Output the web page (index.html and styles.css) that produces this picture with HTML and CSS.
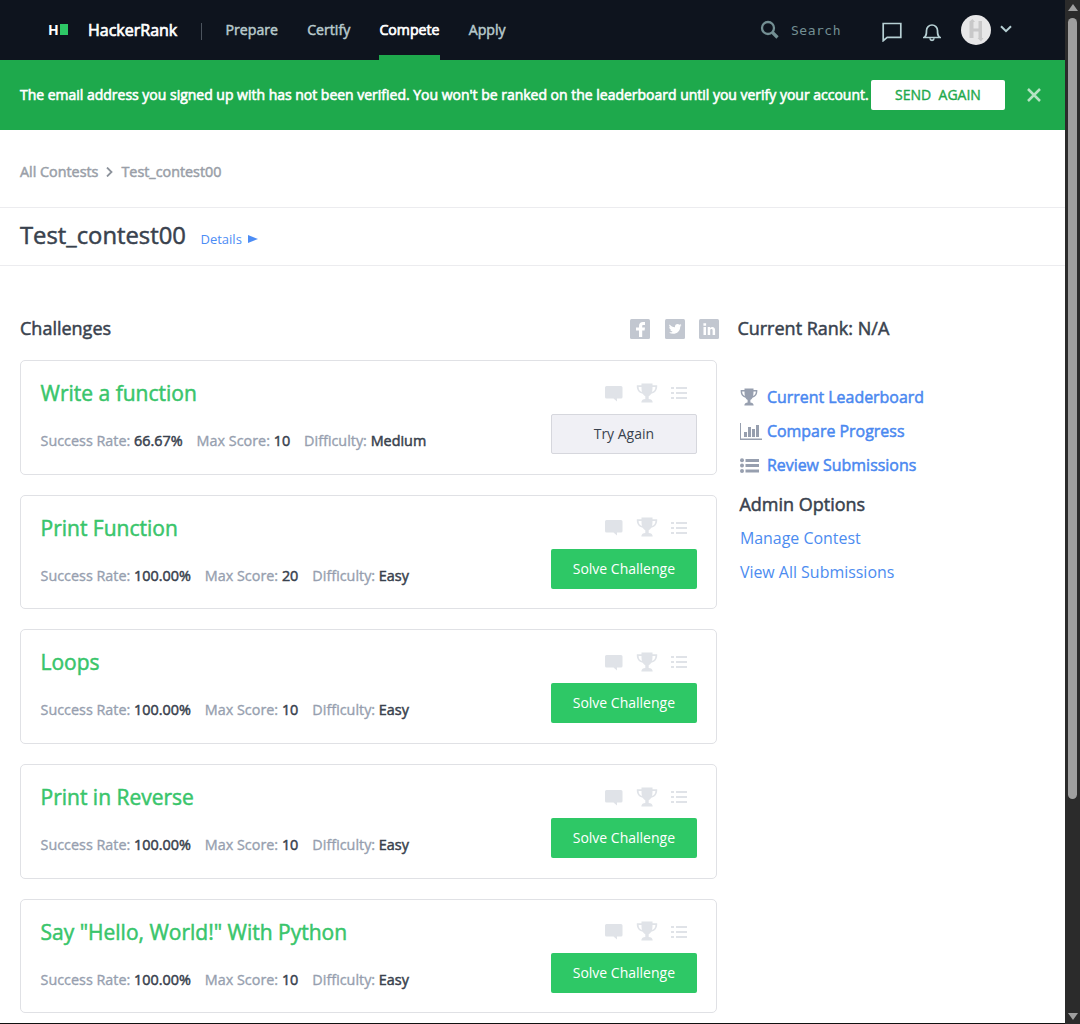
FILE: index.html
```html
<!DOCTYPE html>
<html lang="en">
<head>
<meta charset="utf-8">
<title>Test_contest00 | HackerRank</title>
<link rel="stylesheet" href="styles.css">
</head>
<body>
<svg class="defs" width="0" height="0">
  <symbol id="chat" viewBox="0 0 20 20"><path d="M2.500 3h14.500a1.500 1.500 0 0 1 1.500 1.500v9.500a1.500 1.500 0 0 1-1.500 1.500h-4v3l-3.500-3h-7A1.500 1.500 0 0 1 1 14V4.500A1.500 1.500 0 0 1 2.500 3z"/></symbol>
  <symbol id="trophy" viewBox="0 0 22 20"><path fill-rule="evenodd" d="M5.500.5h11v1.800h4.700c.3 4.800-2 7.700-5.900 8.500-.8 1.300-1.600 2-2.600 2.400v2.800c2 .2 4 .9 4 3.500H5.300c0-2.600 2-3.300 4-3.500v-2.800c-1-.4-1.800-1.100-2.600-2.400C2.800 10 .5 7.100.8 2.300h4.700zM2.600 4c.1 2.500 1.200 4.200 3.400 5-.4-1.500-.5-3-.5-5zm13.900 0c0 2-.1 3.500-.5 5 2.200-.8 3.300-2.500 3.400-5z"/></symbol>
  <symbol id="list" viewBox="0 0 16 14"><path d="M0 1h3v2H0zM5 1h11v2H5zM0 6h3v2H0zM5 6h11v2H5zM0 11h3v2H0zM5 11h11v2H5z"/></symbol>
</svg>
<div class="page">
  <header class="nav">
    <div class="logo"><span>H</span><i></i></div>
    <div class="brand bold">HackerRank</div>
    <div class="divider"></div>
    <nav class="menu bold">
      <a>Prepare</a><a>Certify</a><a class="active">Compete</a><a>Apply</a>
    </nav>
    <div class="search">
      <svg width="20" height="20" viewBox="0 0 20 20"><circle cx="8" cy="8" r="6" fill="none" stroke="#738f93" stroke-width="2.300"/><path d="M12.500 12.500l5 5" stroke="#738f93" stroke-width="3.200"/></svg>
      <span>Search</span>
    </div>
    <svg class="msg" width="20" height="20" viewBox="0 0 20 20"><path d="M1.200 1.500h17.600v13.800H5.200l-4 3.400z"/></svg>
    <svg class="bell" width="18" height="19" viewBox="0 0 18 19"><path d="M1 14.500c2.500-1.500 2.500-3.500 2.500-7a5.500 5.500 0 0 1 11 0c0 3.500 0 5.500 2.500 7zM7 15.500c.3 2.500 3.700 2.500 4 0"/></svg>
    <div class="avatar"><svg width="30" height="30" viewBox="0 0 30 30"><path d="M8 7l3.500-3L14 7h-1.500v6.500h5V6H21v17h1.500l-2.500 3.500-3.500-3.500h1v-6.500h-5V23H8.500V7z" fill="#c8c8c9"/></svg></div>
    <svg class="caret" width="12" height="8" viewBox="0 0 12 8"><path d="M1 1.200l5 5 5-5"/></svg>
  </header>
  <div class="banner">
    <span class="banner-text bold">The email address you signed up with has not been verified. You won't be ranked on the leaderboard until you verify your account.</span>
    <button class="send">SEND&nbsp; AGAIN</button>
    <svg class="close" width="14" height="14" viewBox="0 0 14 14"><path d="M1 1l12 12M13 1L1 13"/></svg>
  </div>
  <div class="crumbs bold"><span>All Contests</span><svg width="7" height="10" viewBox="0 0 7 10"><path d="M1 .5L5.500 5 1 9.500"/></svg><span>Test_contest00</span></div>
  <div class="title-row"><h1 class="bold">Test_contest00</h1><a class="details"><span>Details</span><svg width="10" height="8" viewBox="0 0 10 8"><path d="M0 0l10 4-10 4z"/></svg></a></div>
  <main class="content">
    <section class="left">
      <div class="section-head"><h2 class="bold">Challenges</h2>
        <div class="social">
          <svg width="20" height="20" viewBox="0 0 20 20"><rect width="20" height="20" rx="1.500" fill="#c2c7d0"/><path d="M9 18v-6.500H6V8.500h3V7c0-2.700 1.500-4 4-4h2v3h-1.500c-1 0-1.300.4-1.300 1.300v1.200H15l-.4 3h-2.400V18z" fill="#fff"/></svg>
          <svg width="20" height="20" viewBox="0 0 20 20"><rect width="20" height="20" rx="1.500" fill="#c2c7d0"/><path d="M4.500 5.500c1.500 1.700 3.200 2.500 5.500 2.700-.5-3 2.700-4.200 4.500-2.500l1.800-.6-1 1.500 1.200-.3-1.300 1.400c.2 5.300-5.500 9-11.200 6 1.600 0 2.700-.4 3.600-1.200-1.300-.2-2-.8-2.400-1.800h1.100c-1.300-.5-2-1.400-2-2.700l1.100.3c-1.200-.9-1.500-1.900-.9-2.800z" fill="#fff"/></svg>
          <svg width="20" height="20" viewBox="0 0 20 20"><rect width="20" height="20" rx="1.500" fill="#c2c7d0"/><path d="M4.500 8h2.500v8H4.500zM4.400 4.300h2.700v2.500H4.400zM8.700 8h2.400v1.100c1.400-2 5-1.500 5 1.900v5h-2.500v-4.500c0-2-2.400-1.900-2.400 0V16H8.700z" fill="#fff"/></svg>
        </div>
      </div>
      <article class="card"><div class="info"><h3 class="bold">Write a function</h3><p class="stats"><span>Success Rate: <b>66.67%</b></span><span>Max Score: <b>10</b></span><span>Difficulty: <b>Medium</b></span></p></div><div class="actions"><div class="icons"><svg class="i-chat"><use href="#chat"/></svg><svg class="i-trophy"><use href="#trophy"/></svg><svg class="i-list"><use href="#list"/></svg></div><button class="btn retry">Try Again</button></div></article>
      <article class="card"><div class="info"><h3 class="bold">Print Function</h3><p class="stats"><span>Success Rate: <b>100.00%</b></span><span>Max Score: <b>20</b></span><span>Difficulty: <b>Easy</b></span></p></div><div class="actions"><div class="icons"><svg class="i-chat"><use href="#chat"/></svg><svg class="i-trophy"><use href="#trophy"/></svg><svg class="i-list"><use href="#list"/></svg></div><button class="btn">Solve Challenge</button></div></article>
      <article class="card"><div class="info"><h3 class="bold">Loops</h3><p class="stats"><span>Success Rate: <b>100.00%</b></span><span>Max Score: <b>10</b></span><span>Difficulty: <b>Easy</b></span></p></div><div class="actions"><div class="icons"><svg class="i-chat"><use href="#chat"/></svg><svg class="i-trophy"><use href="#trophy"/></svg><svg class="i-list"><use href="#list"/></svg></div><button class="btn">Solve Challenge</button></div></article>
      <article class="card"><div class="info"><h3 class="bold">Print in Reverse</h3><p class="stats"><span>Success Rate: <b>100.00%</b></span><span>Max Score: <b>10</b></span><span>Difficulty: <b>Easy</b></span></p></div><div class="actions"><div class="icons"><svg class="i-chat"><use href="#chat"/></svg><svg class="i-trophy"><use href="#trophy"/></svg><svg class="i-list"><use href="#list"/></svg></div><button class="btn">Solve Challenge</button></div></article>
      <article class="card"><div class="info"><h3 class="bold">Say "Hello, World!" With Python</h3><p class="stats"><span>Success Rate: <b>100.00%</b></span><span>Max Score: <b>10</b></span><span>Difficulty: <b>Easy</b></span></p></div><div class="actions"><div class="icons"><svg class="i-chat"><use href="#chat"/></svg><svg class="i-trophy"><use href="#trophy"/></svg><svg class="i-list"><use href="#list"/></svg></div><button class="btn">Solve Challenge</button></div></article>
    </section>
    <aside class="side">
      <h2 class="bold rank">Current Rank: N/A</h2>
      <ul class="links bold">
        <li><svg width="18" height="18" viewBox="0 0 22 20" preserveAspectRatio="none"><path fill-rule="evenodd" d="M5.500.5h11v1.800h4.700c.3 4.800-2 7.700-5.900 8.500-.8 1.300-1.600 2-2.600 2.400v2.800c2 .2 4 .9 4 3.500H5.300c0-2.600 2-3.300 4-3.500v-2.800c-1-.4-1.800-1.100-2.600-2.400C2.800 10 .5 7.100.8 2.300h4.700zM2.600 4c.1 2.500 1.200 4.200 3.400 5-.4-1.500-.5-3-.5-5zm13.900 0c0 2-.1 3.500-.5 5 2.200-.8 3.300-2.500 3.400-5z"/></svg><a>Current Leaderboard</a></li>
        <li><svg width="22" height="17" viewBox="0 0 22 17"><path d="M0 0h1v15.500h21V17H0zM4 9h3v5H4zM8 4h3v10H8zM12 6h3v8h-3zM16 2h3v12h-3z"/></svg><a>Compare Progress</a></li>
        <li><svg width="19" height="15" viewBox="0 0 19 15"><path d="M5.500 1H19v3H5.500zM5.500 6H19v3H5.500zM5.500 11.500H19v3H5.500z"/><circle cx="2" cy="2.300" r="2"/><circle cx="2" cy="7.500" r="2"/><circle cx="2" cy="13" r="2"/></svg><a>Review Submissions</a></li>
      </ul>
      <h2 class="bold admin">Admin Options</h2>
      <ul class="links"><li><a>Manage Contest</a></li><li><a>View All Submissions</a></li></ul>
    </aside>
  </main>
</div>
<div class="scrollbar"><i class="up"></i><i class="thumb"></i><i class="down"></i></div>
</body>
</html>
```
FILE: styles.css
```css
* { box-sizing: border-box; }
body { margin: 0; height: 1024px; display: flex; overflow: hidden; background: #fff; font-family: "Open Sans", sans-serif; font-size: 14px; color: #39424e; }
h1, h2, h3, p, ul { margin: 0; padding: 0; font-weight: 400; list-style: none; }
svg { display: block; flex: none; }
.defs { display: none; }
.bold { -webkit-text-stroke: 0.5px currentColor; }
.page { width: 1065px; height: 1024px; overflow: hidden; border-bottom: 1px solid #111; flex: none; white-space: nowrap; }

.nav { height: 60px; background: #0e141e; display: flex; align-items: center; color: #b7c9cc; }
.logo { margin-left: 48px; width: 40px; height: 20px; margin-top: -2px; display: flex; align-items: center; gap: 1px; color: #fff; font: 700 14px "Open Sans", sans-serif; }
.logo i { width: 8px; height: 11px; background: #2ec866; }
.brand { width: 113px; margin-top: -1px; font-size: 16px; color: #fff; -webkit-text-stroke-width: 0.7px; }
.divider { width: 1px; height: 17px; background: #4b535d; margin-top: 2px; }
.menu { display: flex; gap: 29.200px; margin-left: 23.500px; height: 60px; line-height: 60px; width: 534.500px; font-size: 14.150px; }
.menu .active { color: #fff; box-shadow: inset 0 -5px #1ea94c; -webkit-text-stroke-width: 0.7px; }
.search { display: flex; align-items: center; gap: 11px; width: 122px; font: 13px "DejaVu Sans Mono", monospace; letter-spacing: 0.500px; color: #738f93; }
.msg, .bell, .caret { fill: none; stroke: #b7d0d4; stroke-width: 1.700; }
.msg { margin-top: 4px; }
.bell { margin: 4px 0 0 21px; }
.avatar { width: 30px; height: 30px; border-radius: 50%; background: #e7e7e8; overflow: hidden; margin-left: 20px; }
.caret { margin: -3px 0 0 9px; stroke-width: 2; }

.banner { height: 70px; background: #1ea94c; display: flex; align-items: center; padding-left: 20px; color: #fff; }
.banner-text { width: 851px; padding-bottom: 1px; letter-spacing: -0.012px; -webkit-text-stroke-width: 0.6px; }
.send { width: 134px; height: 30px; border: 0; border-radius: 2px; padding: 0 0 2px; background: #fff; color: #1ea94c; font: 14px "Open Sans", sans-serif; -webkit-text-stroke: 0.4px currentColor; flex: none; }
.close { margin-left: 22px; fill: none; stroke: #b5e3c4; stroke-width: 2.500; }

.crumbs { height: 78px; border-bottom: 1px solid #ececef; padding: 6px 0 0 20px; display: flex; align-items: center; font-size: 14.350px; color: #9a9fa8; }
.crumbs svg { fill: none; stroke: #8d939c; stroke-width: 1.800; margin: 0 8px; }
.title-row { height: 58px; border-bottom: 1px solid #ececef; display: flex; align-items: baseline; padding: 11px 0 0 20px; }
h1 { font-size: 23.800px; line-height: 33px; width: 180.500px; }
.details { font-size: 13px; color: #4c8cf5; display: flex; align-items: center; gap: 6px; }
.details svg { fill: currentColor; }

.content { display: flex; padding: 50px 0 0 20px; }
.left { width: 697.400px; }
.section-head { height: 44px; display: flex; justify-content: space-between; align-items: flex-start; margin-right: -2px; }
h2 { font-size: 18px; line-height: 25px; }
.social { display: flex; gap: 14.500px; padding-top: 2.500px; }
.card { height: 114.700px; margin-bottom: 20px; border: 1px solid #e0e1e5; border-radius: 5px; display: flex; justify-content: space-between; padding: 16px 19.500px 0; }
h3 { font-size: 21px; line-height: 32px; color: #39c56b; }
.stats { display: flex; gap: 14px; margin-top: 22px; line-height: 20px; font-size: 14.380px; color: #979faf; -webkit-text-stroke: 0.35px currentColor; }
.stats b { font-weight: 400; color: #39424e; -webkit-text-stroke: 0.5px currentColor; }
.actions { width: 146px; }
.icons { display: flex; height: 37px; padding: 5.500px 10px 0 0; justify-content: flex-end; align-items: flex-start; fill: #e0e3e8; }
.i-chat { width: 20px; height: 20px; }
.i-trophy { width: 22px; height: 20px; margin-left: 12px; }
.i-list { width: 16px; height: 14px; margin: 3.500px 0 0 13px; }
.btn { display: block; width: 146px; height: 40px; padding: 0 0 1px; border: 0; border-radius: 2px; background: #2ec866; color: #fff; font: 14px "Open Sans", sans-serif; }
.retry { background: #f0f0f5; border: 1px solid #d6d7dd; color: #39424e; padding-bottom: 2px; }

.side { margin-left: 20px; }
.rank { margin-bottom: 39px; }
.links { margin-left: 2.500px; font-size: 15.950px; color: #4c8cf0; }
.links li { height: 34px; display: grid; grid-template-columns: auto; align-items: center; }
.links.bold li { grid-template-columns: 27px auto; }
.links.bold a { color: #4a88f0; }
.links svg { fill: #979faf; }
.admin { margin: 10px 0 4px 2px; }

.scrollbar { width: 15px; height: 1024px; background: #2b2b2b; display: flex; flex-direction: column; align-items: center; padding: 4px 0; flex: none; }
.scrollbar .up, .scrollbar .down { border: 5px solid transparent; border-top: 0; border-bottom: 7px solid #9f9f9f; }
.scrollbar .thumb { width: 9px; height: 781px; margin-top: 7px; border-radius: 5px; background: #9f9f9f; }
.scrollbar .down { border-bottom: 0; border-top: 7px solid #9f9f9f; margin-top: auto; }
```
